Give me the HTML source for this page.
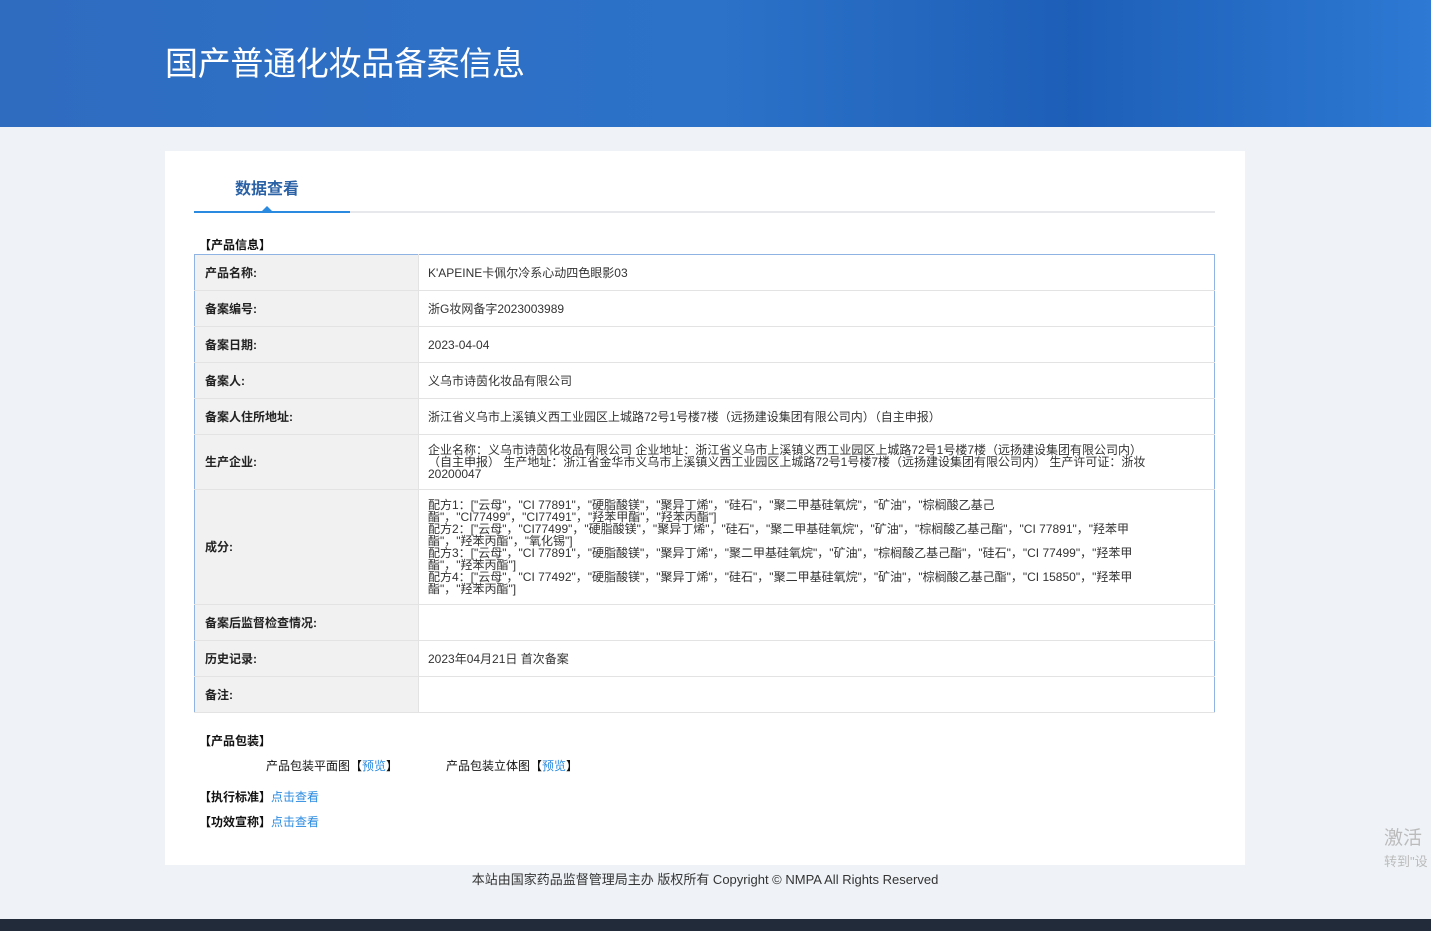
<!DOCTYPE html>
<html><head><meta charset="utf-8"><style>
*{margin:0;padding:0;box-sizing:border-box}
body{width:1431px;height:931px;overflow:hidden;background:#eff3f7;font-family:"Liberation Sans","Noto Sans CJK SC",sans-serif;font-size:12px;color:#333;position:relative}
.hdr{position:absolute;left:0;top:0;width:1431px;height:127px;background:linear-gradient(90deg,#2f6cc0 0%,#2c72c9 50%,#1d5fb8 75%,#2d79d3 100%);overflow:hidden}
.hdr h1{position:absolute;left:165px;top:37px;font-size:33px;font-weight:normal;color:#fff;letter-spacing:-0.3px;font-family:"Noto Sans CJK SC",sans-serif}
.card{position:absolute;left:165px;top:151px;width:1080px;height:714px;background:#fff}
.tab{position:absolute;left:70px;top:24px;font-size:16px;font-weight:bold;color:#2b62a6;font-family:"Noto Sans CJK SC",sans-serif}
.line{position:absolute;left:29px;top:60px;width:1021px;height:2px;background:#e6e8eb}
.line2{position:absolute;left:29px;top:60px;width:156px;height:2px;background:#2a8ae0}
.tri{position:absolute;left:97px;top:55px;width:0;height:0;border-left:5px solid transparent;border-right:5px solid transparent;border-bottom:5px solid #2a8ae0}
.sec{position:absolute;font-weight:bold;color:#111;font-size:12px}
table{position:absolute;left:29px;top:103px;width:1021px;border-collapse:collapse;border:1px solid #8fb3e3}
td{border-bottom:1px solid #e3e3e3;vertical-align:middle;line-height:12px;font-size:12px}
td.l{width:224px;background:#f1f1f1;font-weight:bold;padding-left:10px;color:#222;border-right:1px solid #e3e3e3}
td.v{padding-left:9px;color:#333}
a{color:#2a8ae0;text-decoration:none}
.foot{position:absolute;left:0;width:1410px;top:869px;text-align:center;font-size:13px;color:#333}
.task{position:absolute;left:0;top:919px;width:1431px;height:12px;background:#222b3a}
.wm{position:absolute;left:1384px;top:823px;color:#bbb;font-size:19px}
.wm2{position:absolute;left:1384px;top:851px;color:#bbb;font-size:13px}
</style></head><body>
<div class="hdr"><h1>国产普通化妆品备案信息</h1></div>
<div class="card">
<div class="tab">数据查看</div>
<div class="line"></div><div class="line2"></div><div class="tri"></div>
<div class="sec" style="left:34px;top:85px">【产品信息】</div>
<table>
<tr style="height:36px"><td class="l">产品名称:</td><td class="v">K'APEINE卡佩尔冷系心动四色眼影03</td></tr>
<tr style="height:36px"><td class="l">备案编号:</td><td class="v">浙G妆网备字2023003989</td></tr>
<tr style="height:36px"><td class="l">备案日期:</td><td class="v">2023-04-04</td></tr>
<tr style="height:36px"><td class="l">备案人:</td><td class="v">义乌市诗茵化妆品有限公司</td></tr>
<tr style="height:36px"><td class="l">备案人住所地址:</td><td class="v">浙江省义乌市上溪镇义西工业园区上城路72号1号楼7楼（远扬建设集团有限公司内）（自主申报）</td></tr>
<tr style="height:55px"><td class="l">生产企业:</td><td class="v">企业名称：义乌市诗茵化妆品有限公司 企业地址：浙江省义乌市上溪镇义西工业园区上城路72号1号楼7楼（远扬建设集团有限公司内）<br>（自主申报） 生产地址：浙江省金华市义乌市上溪镇义西工业园区上城路72号1号楼7楼（远扬建设集团有限公司内） 生产许可证：浙妆<br>20200047</td></tr>
<tr style="height:115px"><td class="l">成分:</td><td class="v">配方1：["云母"，"CI 77891"，"硬脂酸镁"，"聚异丁烯"，"硅石"，"聚二甲基硅氧烷"，"矿油"，"棕榈酸乙基己<br>酯"，"CI77499"，"CI77491"，"羟苯甲酯"，"羟苯丙酯"]<br>配方2：["云母"，"CI77499"，"硬脂酸镁"，"聚异丁烯"，"硅石"，"聚二甲基硅氧烷"，"矿油"，"棕榈酸乙基己酯"，"CI 77891"，"羟苯甲<br>酯"，"羟苯丙酯"，"氧化锡"]<br>配方3：["云母"，"CI 77891"，"硬脂酸镁"，"聚异丁烯"，"聚二甲基硅氧烷"，"矿油"，"棕榈酸乙基己酯"，"硅石"，"CI 77499"，"羟苯甲<br>酯"，"羟苯丙酯"]<br>配方4：["云母"，"CI 77492"，"硬脂酸镁"，"聚异丁烯"，"硅石"，"聚二甲基硅氧烷"，"矿油"，"棕榈酸乙基己酯"，"CI 15850"，"羟苯甲<br>酯"，"羟苯丙酯"]</td></tr>
<tr style="height:36px"><td class="l">备案后监督检查情况:</td><td class="v"></td></tr>
<tr style="height:36px"><td class="l">历史记录:</td><td class="v">2023年04月21日 首次备案</td></tr>
<tr style="height:36px"><td class="l">备注:</td><td class="v"></td></tr>
</table>
<div class="sec" style="left:34px;top:581px">【产品包装】</div>
<div style="position:absolute;left:101px;top:606px;color:#111">产品包装平面图【<a>预览</a>】</div>
<div style="position:absolute;left:281px;top:606px;color:#111">产品包装立体图【<a>预览</a>】</div>
<div style="position:absolute;left:34px;top:637px"><b style="color:#111">【执行标准】</b><a>点击查看</a></div>
<div style="position:absolute;left:34px;top:662px"><b style="color:#111">【功效宣称】</b><a>点击查看</a></div>
</div>
<div class="foot">本站由国家药品监督管理局主办 版权所有 Copyright © NMPA All Rights Reserved</div>
<div class="wm">激活</div><div class="wm2">转到"设</div>
<div class="task"></div>
</body></html>
